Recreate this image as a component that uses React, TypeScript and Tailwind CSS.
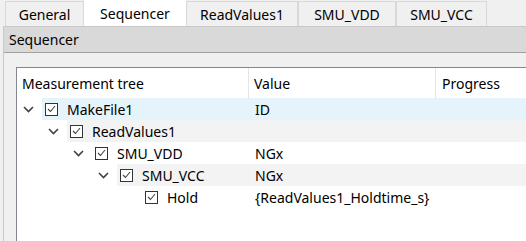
import React from 'react';

type Node = {
  name: string;
  value: string;
  depth: number;
  expandable: boolean;
  tint?: 'blue' | 'gray';
};

const TABS = ['General', 'Sequencer', 'ReadValues1', 'SMU_VDD', 'SMU_VCC'];
const TAB_WIDTHS = ['w-[79px]', 'w-[102px]', 'w-[112px]', 'w-[98px]', 'w-[91px]'];

const NODES: Node[] = [
  { name: 'MakeFile1', value: 'ID', depth: 0, expandable: true, tint: 'blue' },
  { name: 'ReadValues1', value: '', depth: 1, expandable: true, tint: 'gray' },
  { name: 'SMU_VDD', value: 'NGx', depth: 2, expandable: true },
  { name: 'SMU_VCC', value: 'NGx', depth: 3, expandable: true, tint: 'gray' },
  { name: 'Hold', value: '{ReadValues1_Holdtime_s}', depth: 4, expandable: false },
];

function Chevron() {
  return (
    <svg width="11" height="7" viewBox="0 0 11 7" className="text-[#404040]">
      <path d="M1 1 L5.5 5.5 L10 1" fill="none" stroke="currentColor" strokeWidth="1.6" />
    </svg>
  );
}

function CheckBox() {
  return (
    <div className="flex h-[13px] w-[13px] shrink-0 items-center justify-center border border-[#333333] bg-white">
      <svg width="9" height="8" viewBox="0 0 9 8">
        <path d="M1 4 L3.5 6.5 L8 1" fill="none" stroke="#444444" strokeWidth="1.1" />
      </svg>
    </div>
  );
}

function Row({ node }: { node: Node }) {
  const lead = 25 + node.depth * 25;
  const bg = node.tint === 'blue' ? 'bg-[#e5f3fb]' : node.tint === 'gray' ? 'bg-[#f3f3f3]' : '';
  return (
    <div className="flex h-[22px]">
      <div className="flex shrink-0 items-center justify-end pr-[8px]" style={{ width: lead }}>
        {node.expandable && <Chevron />}
      </div>
      <div className={`flex flex-1 items-center ${bg}`}>
        <div className="flex shrink-0 items-center gap-[9px] pl-[3px]" style={{ width: 232 - lead }}>
          <CheckBox />
          <span>{node.name}</span>
        </div>
        <div className="w-[187px] shrink-0 pl-[6px] whitespace-nowrap">{node.value}</div>
      </div>
    </div>
  );
}

export default function App() {
  return (
    <div className="h-[241px] w-[526px] overflow-hidden bg-[#f0f0f0] font-['Segoe_UI','Noto_Sans',sans-serif] text-[14px] text-black">
      {/* tab strip */}
      <div className="flex h-[26px] items-end pl-[5px]">
        {TABS.map((t, i) =>
          t === 'Sequencer' ? (
            <div key={t} className={`${TAB_WIDTHS[i]} flex h-[26px] items-center justify-center bg-white`}>
              {t}
            </div>
          ) : (
            <div
              key={t}
              className={`${TAB_WIDTHS[i]} flex h-[25px] items-center justify-center border border-b-0 border-[#d9d9d9] bg-[#f0f0f0]`}
            >
              {t}
            </div>
          )
        )}
      </div>

      <div className="flex h-[215px] flex-col border-l border-[#c8c8c8] ml-[3px]">
        <div className="flex h-[27px] shrink-0 items-center border-y border-t-[#c8c8c8] border-b-[#a0a0a0] bg-[#d9d9d9] pl-[5px]">
          Sequencer
        </div>

        <div className="flex-1 pl-[12px] pt-[14px]">
          <div className="h-full border-l border-t border-[#828790] bg-white">
            <div className="flex h-[30px] items-center">
              <div className="flex h-full w-[232px] items-center border-r border-[#e5e5e5] pl-[5px]">Measurement tree</div>
              <div className="flex h-full w-[187px] items-center border-r border-[#e5e5e5] pl-[5px]">Value</div>
              <div className="flex h-full flex-1 items-center pl-[6px]">Progress</div>
            </div>
            {NODES.map((n) => (
              <Row key={n.name} node={n} />
            ))}
          </div>
        </div>
      </div>
    </div>
  );
}
